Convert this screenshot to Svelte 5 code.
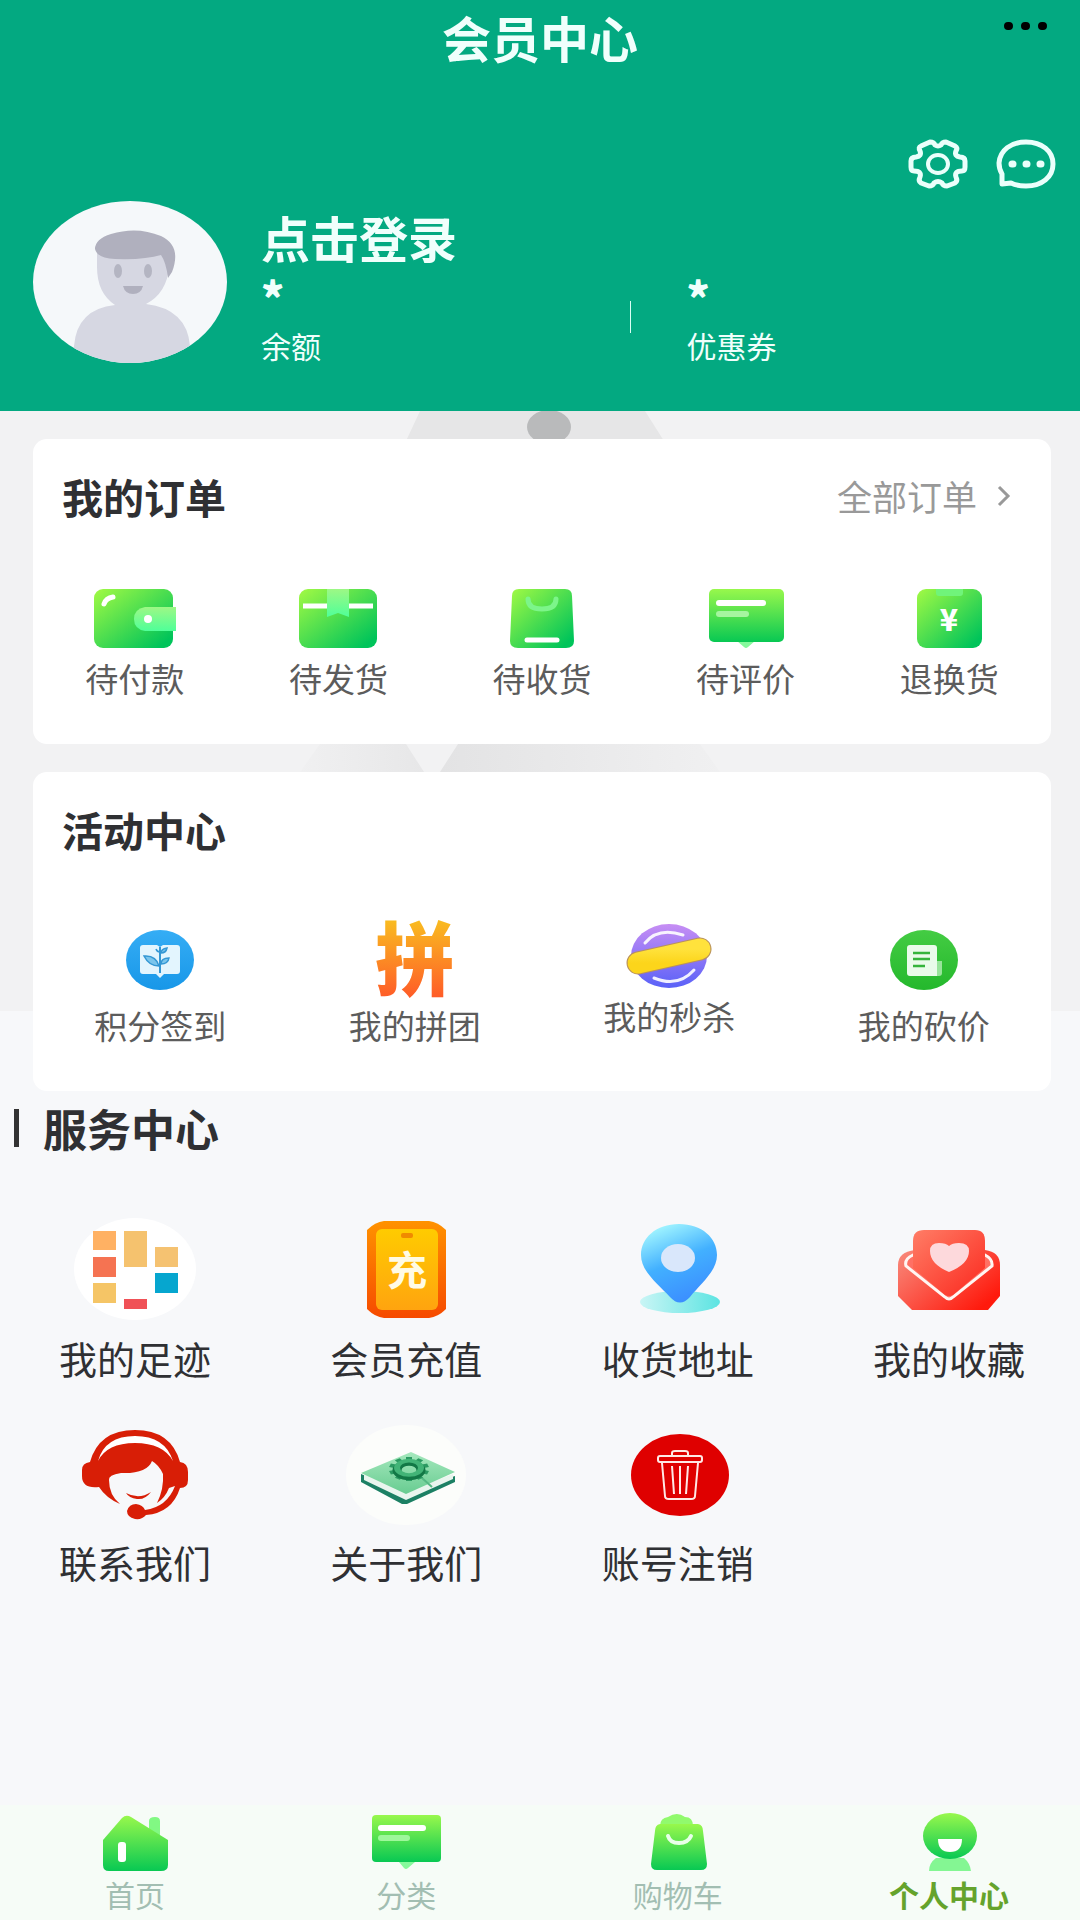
<script>
	const orders = [
		{ icon: "wallet", label: "待付款" },
		{ icon: "parcel", label: "待发货" },
		{ icon: "bag", label: "待收货" },
		{ icon: "comment", label: "待评价" },
		{ icon: "refund", label: "退换货" }
	];
	const activities = [
		{ icon: "signin", label: "积分签到", height: 90 },
		{ icon: "group", label: "我的拼团", height: 90 },
		{ icon: "flash", label: "我的秒杀", height: 81 },
		{ icon: "bargain", label: "我的砍价", height: 90 }
	];
	const services = [
		{ icon: "footprint", label: "我的足迹" },
		{ icon: "recharge", label: "会员充值" },
		{ icon: "address", label: "收货地址" },
		{ icon: "favorite", label: "我的收藏" },
		{ icon: "support", label: "联系我们" },
		{ icon: "about", label: "关于我们" },
		{ icon: "delete", label: "账号注销" }
	];
	const tabs = [
		{ icon: "home", label: "首页" },
		{ icon: "category", label: "分类" },
		{ icon: "cart", label: "购物车" },
		{ icon: "me", label: "个人中心", active: true }
	];
	const gearTeeth = Array.from({ length: 10 }, (_, i) => i * 36);
</script>

{#snippet orderIcon(name)}
	<svg width="84" height="64" viewBox="0 0 84 64" aria-hidden="true">
		{#if name === "wallet"}
			<rect x="1" y="2" width="79" height="59" rx="9" fill="url(#green-diag)" />
			<path d="M11 17Q13 11 20 10" fill="none" stroke="#fff" stroke-width="5" stroke-linecap="round" />
			<path d="M52 20H83V44H52Q41 42 41 32T52 20Z" fill="url(#mint)" />
			<circle cx="55" cy="32" r="4" fill="#fff" />
		{:else if name === "parcel"}
			<rect x="3" y="2" width="78" height="59" rx="9" fill="url(#green-diag)" />
			<path d="M7 19H77" stroke="#fff" stroke-width="5" />
			<path d="M31 2H53V30L42 26L31 30Z" fill="url(#mint)" />
		{:else if name === "bag"}
			<path d="M19 2H65Q72 2 72 9L74 54Q74 61 66 61H18Q10 61 10 54L12 9Q12 2 19 2Z" fill="url(#green-diag)" />
			<path d="M28 12Q28 22 42 22T56 12" fill="none" stroke="#7cf58a" stroke-width="5" stroke-linecap="round" />
			<path d="M27 53H57" stroke="#fff" stroke-width="5" stroke-linecap="round" />
		{:else if name === "comment"}
			<path d="M33 54H51L44 60Q42 62 40 60Z" fill="#86f99c" />
			<rect x="5" y="2" width="75" height="53" rx="5" fill="url(#green-down)" />
			<path d="M15 16H59" stroke="#fff" stroke-width="6" stroke-linecap="round" />
			<path d="M15 27H42" stroke="#a5f5a0" stroke-width="6" stroke-linecap="round" />
		{:else}
			<rect x="10" y="2" width="65" height="59" rx="9" fill="url(#green-diag)" />
			<path d="M29 2H56V6Q56 9 53 9H32Q29 9 29 6Z" fill="#70f47a" />
			<text class="yen" x="42" y="44" text-anchor="middle">¥</text>
		{/if}
	</svg>
{/snippet}

{#snippet activityIcon(name, height)}
	<svg width="90" {height} viewBox="0 0 90 {height}" aria-hidden="true">
		{#if name === "signin"}
			<ellipse cx="45" cy="44" rx="34" ry="30" fill="url(#blue-disc)" />
			<path d="M28 29H42L45 31L48 29H62Q65 29 65 32V55Q65 58 62 58H49L45 62L41 58H28Q25 58 25 55V32Q25 29 28 29Z" fill="#e3f5fe" />
			<path d="M45 31V57" stroke="#3497d4" stroke-width="2" />
			<path d="M44 50Q41 39 29 40Q34 50 44 50ZM46 48Q46 42 54 42Q53 48 46 48ZM45 36Q42 36 41 33M46 37Q46 33 52 32Q51 37 46 37" fill="#7bc5ec" stroke="#3497d4" stroke-width="1.5" />
		{:else if name === "group"}
			<text class="group-char" x="45" y="73" text-anchor="middle">拼</text>
		{:else if name === "flash"}
			<ellipse cx="45" cy="40" rx="38" ry="32" fill="url(#violet)" />
			<path d="M21 27Q34 11 59 19M30 62Q54 72 70 54" fill="none" stroke="#fff" stroke-opacity="0.9" stroke-width="3" stroke-linecap="round" />
			<path d="M14 47L76 33" stroke="#b9925c" stroke-width="23" stroke-linecap="round" />
			<path d="M14 47L76 33" stroke="url(#yellow)" stroke-width="21" stroke-linecap="round" />
		{:else}
			<ellipse cx="45" cy="44" rx="34" ry="30" fill="url(#green-disc)" />
			<path d="M55 45H63V57Q63 60 60 60H55Z" fill="#99e49b" />
			<path d="M31 29H55Q58 29 58 32V60H31Q28 60 28 57V32Q28 29 31 29Z" fill="#eafbea" />
			<path d="M34 37H51M34 43H51M34 50H46" stroke="#35b43b" stroke-width="2.5" />
		{/if}
	</svg>
{/snippet}

{#snippet serviceIcon(name)}
	<svg width="124" height="110" viewBox="0 0 124 110" aria-hidden="true">
		{#if name === "footprint"}
			<ellipse cx="62" cy="53" rx="61" ry="51" fill="#fff" />
			<path d="M20 15H43V34H20Z" fill="#ffb163" />
			<path d="M51 15H74V51H51Z" fill="#f5c26e" />
			<path d="M82 31H105V51H82Z" fill="#f5c271" />
			<path d="M20 41H43V61H20Z" fill="#f57352" />
			<path d="M82 57H105V77H82Z" fill="#06a6cf" />
			<path d="M20 67H43V87H20Z" fill="#f5c566" />
			<path d="M51 83H74V93H51Z" fill="#f05157" />
		{:else if name === "recharge"}
			<path d="M40 5H85Q94 6 102 14V93Q94 101 85 102H40Q31 101 23 93V14Q31 6 40 5Z" fill="url(#orange-case)" />
			<rect x="32" y="13" width="62" height="81" rx="6" fill="url(#amber)" />
			<rect x="57" y="17" width="12" height="5" rx="2" fill="#f08a00" />
			<text class="recharge-char" x="63" y="69" text-anchor="middle">充</text>
		{:else if name === "address"}
			<ellipse cx="64" cy="86" rx="40" ry="11" fill="url(#aqua)" />
			<path d="M63 8C86 8 101 22 101 39C101 55 86 66 74 81Q64 92 54 81C40 66 25 55 25 39C25 22 40 8 63 8Z" fill="url(#pin)" />
			<ellipse cx="62" cy="42" rx="17" ry="14" fill="#d9e7fb" />
		{:else if name === "favorite"}
			<path d="M28 34Q11 36 11 49V80L25 94H101L113 80V49Q113 36 98 34Z" fill="url(#red-mail)" />
			<path d="M26 39Q17 43 19 50L58 81Q62 85 66 81L105 50Q106 43 98 39Z" fill="#ff7064" stroke="#fff5f2" stroke-width="3" />
			<path d="M37 14H88Q98 14 98 25V52L66 79Q62 81 58 79L26 52V25Q26 14 37 14Z" fill="url(#red-card)" />
			<path d="M62 56Q43 48 43 35Q43 27 52 27Q59 27 62 30Q65 27 72 27Q82 27 82 35Q82 48 62 56Z" fill="#fdd9dc" />
		{:else if name === "support"}
			<g fill="#d81e06">
				<path d="M17 42Q26 10 62 10T107 42Q115 43 115 52V60Q115 68 107 68Q99 93 73 95Q69 100 62 99Q54 97 54 91Q56 84 63 84Q70 85 72 90Q94 87 102 66L96 68Q92 78 84 83Q91 69 90 54Q86 45 79 41Q74 54 48 53Q35 55 36 60Q36 75 47 84Q33 78 26 67Q9 69 9 56V50Q9 43 17 42Z" />
				<path d="M53 73Q66 80 78 72Q72 80 64 79Q56 78 53 73Z" />
			</g>
			<path d="M25 41Q32 16 62 16T100 41Q90 23 62 23T25 41Z" fill="#fff" />
		{:else if name === "about"}
			<ellipse cx="62" cy="55" rx="60" ry="50" fill="#fcfdfb" />
			<path d="M17 54V62L58 84H63L111 62V56L62 72Z" fill="#1c8064" />
			<path d="M20 53L61 72L109 54V59L62 80L20 60Z" fill="#e9f5ee" />
			<path d="M17 53L67 32L111 52L62 74Z" fill="url(#book)" />
			<path d="M78 58L88 67" stroke="#56b984" stroke-width="2" />
			<g transform="translate(65 49) scale(1 0.6)">
				{#each gearTeeth as angle}
					<rect x="-3" y="-20" width="6" height="9" fill="#2b9a62" transform="rotate({angle})" />
				{/each}
				<circle cy="2" r="12" fill="none" stroke="#127846" stroke-width="9" />
				<circle cy="-2" r="12" fill="none" stroke="#42b477" stroke-width="6" />
			</g>
		{:else}
			<ellipse cx="64" cy="55" rx="49" ry="41" fill="#df0000" />
			<g fill="none" stroke="#ffe8e6" stroke-width="2" stroke-linejoin="round">
				<path d="M56 36V33Q56 31 59 31H69Q72 31 72 33V36" />
				<rect x="42" y="36" width="44" height="6" rx="2" />
				<path d="M46 43L49 76Q49 79 53 79H75Q79 79 79 76L82 43M56 46L58 74M64 46V74M72 46L70 74" />
			</g>
		{/if}
	</svg>
{/snippet}

{#snippet tabIcon(name)}
	<svg width="80" height="64" viewBox="0 0 80 64" aria-hidden="true">
		{#if name === "home"}
			<path d="M54 10Q54 6 60 6Q65 6 65 10V26H54Z" fill="#81f983" />
			<path d="M27 7Q31 3 36 6L73 29V54Q73 60 66 60H14Q8 60 8 54V29Z" fill="url(#green-down)" />
			<rect x="23" y="31" width="8" height="20" rx="3" fill="#fff" />
		{:else if name === "category"}
			<path d="M33 51H49L42 57Q40 59 38 57Z" fill="#86f99c" />
			<rect x="6" y="4" width="69" height="47" rx="4" fill="url(#green-down)" />
			<path d="M15 17H57" stroke="#fff" stroke-width="6" stroke-linecap="round" />
			<path d="M15 27H41" stroke="#9df79b" stroke-width="6" stroke-linecap="round" />
		{:else if name === "cart"}
			<path d="M22 15Q22 7 30 6Q39 0 47 6Q55 6 55 15Z" fill="#91fa6d" />
			<path d="M22 13H60Q65 14 65 20L69 53Q69 59 63 59H19Q13 59 13 53L17 20Q17 14 22 13Z" fill="url(#green-down)" />
			<path d="M30 25Q32 32 41 32T53 25" fill="none" stroke="#e8ffe9" stroke-width="4" stroke-linecap="round" />
		{:else}
			<path d="M27 47H55Q61 52 62 60H20Q20 52 27 47Z" fill="#84f693" />
			<ellipse cx="41" cy="25" rx="27" ry="23" fill="url(#green-down)" />
			<path d="M29 28H53Q53 41 41 41T29 28Z" fill="#fff" />
		{/if}
	</svg>
{/snippet}

<svg class="defs" width="0" height="0" aria-hidden="true">
	<defs>
		<linearGradient id="green-diag" x2="1" y2="1"><stop stop-color="#a2fa44" /><stop offset="0.9" stop-color="#00c45a" /></linearGradient>
		<linearGradient id="green-down" x2="0" y2="1"><stop stop-color="#98f84c" /><stop offset="1" stop-color="#08c853" /></linearGradient>
		<linearGradient id="mint" x2="0" y2="1"><stop stop-color="#9df885" /><stop offset="1" stop-color="#4fff99" /></linearGradient>
		<linearGradient id="blue-disc" x2="0" y2="1"><stop stop-color="#35adf5" /><stop offset="1" stop-color="#1897e8" /></linearGradient>
		<linearGradient id="green-disc" x2="0" y2="1"><stop stop-color="#44cc43" /><stop offset="1" stop-color="#24b82c" /></linearGradient>
		<linearGradient id="fire" x2="0" y2="1"><stop offset="0.2" stop-color="#f9bd20" /><stop offset="0.9" stop-color="#ff5828" /></linearGradient>
		<linearGradient id="violet" x2="0" y2="1"><stop stop-color="#c78ef4" /><stop offset="1" stop-color="#5961f8" /></linearGradient>
		<linearGradient id="yellow" x2="0" y2="1"><stop stop-color="#ffe23c" /><stop offset="1" stop-color="#fcd51b" /></linearGradient>
		<linearGradient id="orange-case" x2="0" y2="1"><stop stop-color="#ff9200" /><stop offset="1" stop-color="#f64a00" /></linearGradient>
		<linearGradient id="amber" x2="0" y2="1"><stop stop-color="#ffcb00" /><stop offset="1" stop-color="#ffa40f" /></linearGradient>
		<linearGradient id="aqua" x2="1" y2="0"><stop stop-color="#c9f5f5" /><stop offset="1" stop-color="#5ce4e2" /></linearGradient>
		<linearGradient id="pin" x1="0.2" y1="0" x2="0.6" y2="1"><stop stop-color="#a9fbff" /><stop offset="0.5" stop-color="#42b0ff" /><stop offset="1" stop-color="#3b8dff" /></linearGradient>
		<linearGradient id="red-mail" x2="1" y2="0.7"><stop stop-color="#f88c7e" /><stop offset="1" stop-color="#ff1a0d" /></linearGradient>
		<linearGradient id="red-card" x2="1" y2="1"><stop stop-color="#ff7d66" /><stop offset="1" stop-color="#fb281e" /></linearGradient>
		<linearGradient id="book" x2="0" y2="1"><stop stop-color="#a5e8bd" /><stop offset="1" stop-color="#68cc91" /></linearGradient>
		<linearGradient id="shade-left"><stop stop-color="#f0f0f1" /><stop offset="1" stop-color="#e7e7e8" /></linearGradient>
		<linearGradient id="shade-right"><stop stop-color="#e3e3e4" /><stop offset="1" stop-color="#f0f0f1" /></linearGradient>
	</defs>
</svg>

<div class="page">
	<header>
		<div class="topbar">
			<h1>会员中心</h1>
			<button class="more" aria-label="更多">
				<svg width="44" height="10" viewBox="0 0 44 10"><path d="M5 5H6M22 5H23M39 5H40" stroke="#000" stroke-width="8" stroke-linecap="round" /></svg>
			</button>
		</div>
		<div class="tools">
			<button aria-label="设置">
				<svg width="60" height="50" viewBox="0 0 60 50" fill="none" stroke="#eafffb" stroke-width="5" stroke-linejoin="round">
					<path d="M22 3Q26 3 27 6Q30 8 33 6Q34 3 38 3L47 7Q50 9 48 12Q46 17 52 18Q57 18 57 22V28Q57 32 54 32Q46 32 48 38Q50 42 47 44L39 47Q35 47 34 44Q30 41 26 44Q25 47 21 47L13 44Q10 42 12 38Q14 32 6 32Q3 32 3 28V22Q3 18 8 18Q14 17 12 12Q10 8 13 7Z" />
					<ellipse cx="30" cy="25" rx="10" ry="9" stroke-width="4" />
				</svg>
			</button>
			<button aria-label="消息">
				<svg width="60" height="50" viewBox="0 0 60 50" fill="none" stroke="#eafffb" stroke-linecap="round" stroke-linejoin="round">
					<path d="M6 35Q3 30 3 24C4 11 15 3 30 3C46 3 57 12 57 25C57 38 46 47 30 47Q21 47 15 44L6 45Z" stroke-width="5" />
					<path d="M16 25H17M30 25H31M44 25H45" stroke-width="7" />
				</svg>
			</button>
		</div>
		<div class="profile">
			<svg class="avatar" width="195" height="162" viewBox="0 0 195 162" role="img" aria-label="头像">
				<clipPath id="avatar-clip"><ellipse cx="97" cy="81" rx="97" ry="81" /></clipPath>
				<g clip-path="url(#avatar-clip)">
					<rect width="195" height="162" fill="#f5f8fa" />
					<path d="M41 162V145Q44 108 82 104Q64 92 64 66V44H136V66Q134 92 113 103Q154 108 157 145V162Z" fill="#d6d7e2" />
					<path d="M62 48Q62 38 78 33Q104 25 128 35Q149 45 139 71L135 77Q133 61 128 54Q112 59 82 58Q64 57 62 48Z" fill="#b0b0be" />
					<ellipse cx="85" cy="70" rx="4" ry="7" fill="#b4b5c2" />
					<ellipse cx="115" cy="70" rx="4" ry="7" fill="#b4b5c2" />
					<path d="M90 85H110Q108 93 100 93T90 85Z" fill="#b0b0be" />
				</g>
			</svg>
			<div class="account">
				<a class="login" href="#login">点击登录</a>
				<div class="stats">
					<div class="stat"><strong>*</strong><span>余额</span></div>
					<i class="divider"></i>
					<div class="stat coupon"><strong>*</strong><span>优惠券</span></div>
				</div>
			</div>
		</div>
	</header>

	<main>
		<svg class="backdrop" viewBox="0 0 1080 600" preserveAspectRatio="none" aria-hidden="true">
			<rect width="1080" height="600" fill="#f2f2f3" />
			<path d="M420 0H645L664 30H406Z" fill="#e6e6e7" />
			<path d="M320 333H406L424 361H300Z" fill="url(#shade-left)" />
			<path d="M458 333H700L720 361H440Z" fill="url(#shade-right)" />
			<ellipse cx="549" cy="16" rx="22" ry="17" fill="#b9babb" />
		</svg>

		<section class="card orders">
			<div class="card-head">
				<h2>我的订单</h2>
				<a class="all" href="#orders">
					全部订单
					<svg width="14" height="22" viewBox="0 0 14 22" aria-hidden="true"><path d="M2 2L11 11L2 20" fill="none" stroke="#999" stroke-width="3" /></svg>
				</a>
			</div>
			<div class="row">
				{#each orders as item}
					<a href="#{item.icon}">{@render orderIcon(item.icon)}<span>{item.label}</span></a>
				{/each}
			</div>
		</section>

		<section class="card activities">
			<div class="card-head"><h2>活动中心</h2></div>
			<div class="row">
				{#each activities as item}
					<a href="#{item.icon}">{@render activityIcon(item.icon, item.height)}<span>{item.label}</span></a>
				{/each}
			</div>
		</section>

		<section class="services">
			<h2>服务中心</h2>
			<div class="grid">
				{#each services as item}
					<a href="#{item.icon}">{@render serviceIcon(item.icon)}<span>{item.label}</span></a>
				{/each}
			</div>
		</section>
	</main>

	<nav>
		{#each tabs as tab}
			<a href="#{tab.icon}" class:active={tab.active} aria-current={tab.active ? "page" : undefined}>
				{@render tabIcon(tab.icon)}<span>{tab.label}</span>
			</a>
		{/each}
	</nav>
</div>

<style>
	:global(body) {
		margin: 0;
		background: #f7f8fa;
	}
	.defs {
		position: absolute;
	}
	.page {
		display: flex;
		flex-direction: column;
		min-height: 100vh;
		font-family: "Noto Sans CJK SC", sans-serif;
		color: #2f3033;
	}
	a {
		color: inherit;
		text-decoration: none;
	}
	button {
		padding: 0;
		border: 0;
		background: none;
		cursor: pointer;
	}
	svg {
		display: block;
		flex: none;
		overflow: visible;
	}
	h1,
	h2 {
		margin: 0;
	}
	header {
		padding-bottom: 46px;
		background: #03a981;
		color: #f0fffc;
	}
	.topbar {
		display: grid;
		grid-template-columns: 1fr auto 1fr;
	}
	h1 {
		grid-column: 2;
		font-size: 49px;
		line-height: 74px;
	}
	.more {
		justify-self: end;
		align-self: start;
		padding: 21px 33px 10px;
	}
	.tools {
		display: flex;
		justify-content: flex-end;
		gap: 28px;
		padding: 65px 24px 0;
	}
	.profile {
		display: flex;
		gap: 33px;
		padding: 12px 0 0 33px;
	}
	.account {
		flex: 1;
		padding-top: 4px;
	}
	.login {
		display: block;
		font-size: 49px;
		font-weight: 700;
		line-height: 64px;
	}
	.stats {
		display: grid;
		grid-template-columns: 45% 1px 1fr;
		align-items: center;
	}
	.stat {
		display: flex;
		flex-direction: column;
		gap: 2px;
	}
	.stat strong {
		font-size: 44px;
		font-weight: 900;
		line-height: 54px;
	}
	.stat span {
		font-size: 30px;
		line-height: 40px;
	}
	.coupon {
		padding-left: 56px;
	}
	.divider {
		height: 32px;
		background: #d9fff5;
	}
	main {
		position: relative;
		padding-top: 28px;
	}
	.backdrop {
		position: absolute;
		z-index: -1;
		top: 0;
		left: 0;
		width: 100%;
		height: 600px;
	}
	.card {
		margin: 0 29px 28px 33px;
		border-radius: 14px;
		background: #fff;
	}
	.card-head {
		display: flex;
		justify-content: space-between;
		align-items: center;
		padding: 27px 40px 0 29px;
	}
	.card h2 {
		font-size: 41px;
		font-weight: 700;
		line-height: 60px;
	}
	.all {
		display: flex;
		align-items: center;
		gap: 20px;
		font-size: 35px;
		line-height: 60px;
		color: #999;
	}
	.row {
		display: flex;
	}
	.row a {
		flex: 1;
		display: flex;
		flex-direction: column;
		align-items: center;
		font-size: 33px;
		line-height: 38px;
		color: #5c5c5c;
	}
	.orders .row {
		padding: 61px 0 47px;
	}
	.orders .row a {
		gap: 8px;
	}
	.activities .row {
		padding: 57px 0 47px;
	}
	.activities {
		margin-bottom: 7px;
	}
	.yen {
		font-size: 30px;
		font-weight: 900;
		fill: #fff;
	}
	.group-char {
		font-size: 80px;
		font-weight: 900;
		fill: url(#fire);
	}
	.recharge-char {
		font-size: 40px;
		font-weight: 700;
		fill: #fffbe6;
	}
	.services h2 {
		display: flex;
		align-items: center;
		gap: 24px;
		padding-left: 14px;
		font-size: 44px;
		font-weight: 700;
		line-height: 60px;
	}
	.services h2::before {
		content: "";
		width: 5px;
		height: 38px;
		background: #333;
	}
	.grid {
		display: grid;
		grid-template-columns: repeat(4, auto);
		justify-content: space-between;
		row-gap: 42px;
		padding: 58px 55px 60px 59px;
	}
	.grid a {
		display: flex;
		flex-direction: column;
		align-items: center;
		gap: 12px;
		font-size: 38px;
		line-height: 40px;
	}
	nav {
		display: flex;
		justify-content: space-between;
		margin-top: auto;
		padding: 6px 71px 10px 75px;
		background: #f6fcf7;
	}
	nav a {
		display: flex;
		flex-direction: column;
		align-items: center;
		gap: 3px;
		width: 120px;
		font-size: 30px;
		line-height: 32px;
		color: #a2beb2;
	}
	nav .active {
		font-weight: 700;
		color: #65a32c;
	}
</style>
